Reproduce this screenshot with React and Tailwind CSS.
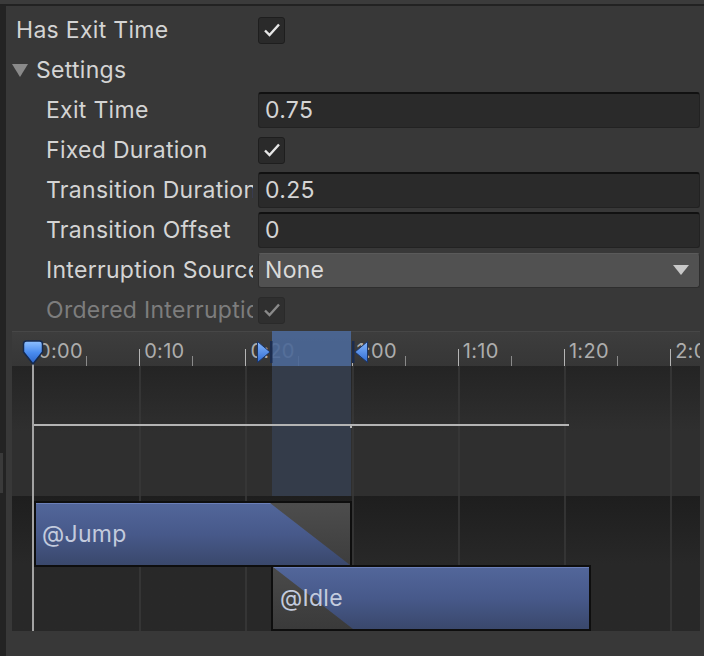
import React from "react";

const font = { fontFamily: "Inter, 'Noto Sans', sans-serif" };

function Check({ dim }) {
  return (
    <div
      className={`w-[27px] h-[27px] rounded-[3px] border flex items-center justify-center ${
        dim ? "bg-[#2f2f2f] border-[#2a2a2a]" : "bg-[#2a2a2a] border-[#1e1e1e]"
      }`}
    >
      <svg width="20" height="20" viewBox="0 0 20 20">
        <path
          d="M3 10.5 L7.5 15 L17 4.5"
          fill="none"
          stroke={dim ? "#8a8a8a" : "#e6e6e6"}
          strokeWidth="2.4"
        />
      </svg>
    </div>
  );
}

function Field({ value }) {
  return (
    <div className="h-[36px] flex-1 rounded-[3px] bg-[#2a2a2a] border border-[#222] border-t-[#111] border-t-2 flex items-center pl-[6px] text-[#d4d4d4]">
      {value}
    </div>
  );
}

function Row({ label, indent, dim, children }) {
  return (
    <div className="h-10 flex items-center">
      <div
        className={`w-[252px] shrink-0 pr-[5px] ${indent ? "pl-[40px]" : "pl-[10px]"} ${
          dim ? "text-[#7d7d7d]" : "text-[#d4d4d4]"
        }`}
      >
        <div className="overflow-hidden whitespace-nowrap">{label}</div>
      </div>
      <div className="flex-1 flex items-center pr-[4px]">{children}</div>
    </div>
  );
}

const majors = ["0:00", "0:10", "0:20", "1:00", "1:10", "1:20", "2:00"];

function Ruler() {
  return (
    <div className="h-[35px] bg-gradient-to-b from-[#3d3d3d] to-[#363636] border-t border-[#474747] flex pl-[21px] overflow-hidden">
      {majors.map((m) => (
        <div key={m} className="w-[106.2px] shrink-0 h-full flex items-end">
          <div className="w-px h-[17px] bg-[#b5b5b5]" />
          <div className="w-[52px] h-full pl-[4px] pt-[8px] text-[20px] leading-[22px] text-[#adadad] whitespace-nowrap">
            {m}
          </div>
          <div className="w-px h-[10px] bg-[#8a8a8a]" />
        </div>
      ))}
    </div>
  );
}

function Timeline() {
  return (
    <div className="relative ml-[6px] mt-[1px] w-[688px] h-[300px] overflow-hidden bg-[#282828]">
      <Ruler />
      {/* curve track */}
      <div className="h-[130px] bg-gradient-to-b from-[#242424] via-[#2f2f2f] to-[#2f2f2f]" />
      {/* clip track */}
      <div className="h-[135px] bg-gradient-to-b from-[#1e1e1e] via-[#282828] to-[#282828]" />

      {/* selection column */}
      <div className="absolute left-[260px] top-0 w-[79px] h-[165px] flex flex-col">
        <div className="h-[35px] bg-[#4b6898]/90" />
        <div className="flex-1 bg-[#343c4a]" />
      </div>

      {/* grid lines */}
      <div className="absolute inset-x-0 top-[35px] bottom-0 flex pl-[21px]">
        {majors.map((m, i) => (
          <div
            key={"g" + m}
            className={`w-[106.2px] shrink-0 h-full ${i === 0 ? "" : "border-l-2 border-[#383838]/80"}`}
          />
        ))}
      </div>

      {/* exit-time curve */}
      <div className="absolute left-[21px] top-[93px] w-[536px] h-[2px] bg-[#b4b4b4]" />
      <div className="absolute left-[338px] top-[94px] w-[2px] h-[3px] bg-[#b4b4b4]" />

      {/* playhead line */}
      <div className="absolute left-[20px] top-[28px] w-[2px] h-[272px] bg-[#a3a3a3]" />

      {/* @Jump clip */}
      <div className="absolute left-[22px] top-[170px] w-[318px] h-[66px] border-2 border-[#0e0e0e] overflow-hidden">
        <div className="absolute inset-0 bg-gradient-to-b from-[#52669a] via-[#47598a] to-[#3a486c] border-t border-[#6b7fb8]" />
        <svg className="absolute right-0 top-0" width="80" height="62" viewBox="0 0 80 62" preserveAspectRatio="none">
          <defs>
            <linearGradient id="gj" x1="0" y1="0" x2="0" y2="1">
              <stop offset="0" stopColor="#4d4d4d" />
              <stop offset="1" stopColor="#3d3d3d" />
            </linearGradient>
          </defs>
          <polygon points="0,0 80,0 80,62" fill="url(#gj)" />
        </svg>
        <div className="relative h-full flex items-center pl-[6px] text-[23px] text-[#c3cbdd]">
          @Jump
        </div>
      </div>

      {/* @Idle clip */}
      <div className="absolute left-[259px] top-[234px] w-[320px] h-[66px] border-2 border-[#0e0e0e] overflow-hidden">
        <div className="absolute inset-0 bg-gradient-to-b from-[#52669a] via-[#47598a] to-[#3a486c] border-t border-[#6b7fb8]" />
        <svg className="absolute left-0 top-0" width="80" height="62" viewBox="0 0 80 62" preserveAspectRatio="none">
          <defs>
            <linearGradient id="gi" x1="0" y1="0" x2="0" y2="1">
              <stop offset="0" stopColor="#4a4a4a" />
              <stop offset="1" stopColor="#3a3a3a" />
            </linearGradient>
          </defs>
          <polygon points="0,0 80,62 0,62" fill="url(#gi)" />
        </svg>
        <div className="relative h-full flex items-center pl-[7px] text-[23px] text-[#c3cbdd]">
          @Idle
        </div>
      </div>

      {/* transition start marker */}
      <svg className="absolute left-[245px] top-[10px]" width="16" height="22" viewBox="0 0 16 22">
        <defs>
          <linearGradient id="mk" x1="0" y1="0" x2="0" y2="1">
            <stop offset="0" stopColor="#86b8ff" />
            <stop offset="1" stopColor="#2f6ad0" />
          </linearGradient>
        </defs>
        <polygon points="0.5,0.5 13,11 0.5,21.5" fill="url(#mk)" stroke="#1c3566" strokeWidth="1" />
        <rect x="13" y="0" width="2.5" height="22" fill="#1c2c4e" />
      </svg>

      {/* transition end marker */}
      <svg className="absolute left-[340px] top-[10px]" width="16" height="22" viewBox="0 0 16 22">
        <rect x="0" y="0" width="2.5" height="22" fill="#1c2c4e" />
        <polygon points="15.5,0.5 3,11 15.5,21.5" fill="url(#mk)" stroke="#1c3566" strokeWidth="1" />
      </svg>

      {/* playhead marker */}
      <svg className="absolute left-[9px] top-[9px]" width="24" height="26" viewBox="0 0 24 26">
        <defs>
          <linearGradient id="ph" x1="0" y1="0" x2="0" y2="1">
            <stop offset="0" stopColor="#8fc0ff" />
            <stop offset="0.5" stopColor="#4a8cf0" />
            <stop offset="1" stopColor="#2a62c8" />
          </linearGradient>
        </defs>
        <path
          d="M2.5 4 Q2.5 1 5.5 1 H18.5 Q21.5 1 21.5 4 V12 L12 24 L2.5 12 Z"
          fill="url(#ph)"
          stroke="#15294d"
          strokeWidth="1.5"
        />
      </svg>
    </div>
  );
}

export default function App() {
  return (
    <div
      className="w-[704px] h-[656px] bg-[#383838] overflow-hidden text-[23px] tracking-[0.3px]"
      style={font}
    >
      <div className="h-[4px] bg-[#3b3b3b]" />
      <div className="h-[2px] bg-[#222]" />
      <div className="flex h-[650px]">
        <div className="w-[6px] shrink-0 bg-[#232323] flex flex-col">
          <div className="h-[447px]" />
          <div className="h-[40px] w-[3px] bg-[#3a3a3a]" />
        </div>
        <div className="flex-1 pt-[4px]">
          <Row label="Has Exit Time">
            <Check />
          </Row>
          <div className="h-10 flex items-center pl-[6px] text-[#d4d4d4]">
            <svg width="16" height="15" viewBox="0 0 16 15" className="mr-[8px]">
              <polygon points="0,1 16,1 8,14" fill="#8a8a8a" />
            </svg>
            Settings
          </div>
          <Row label="Exit Time" indent>
            <Field value="0.75" />
          </Row>
          <Row label="Fixed Duration" indent>
            <Check />
          </Row>
          <Row label="Transition Duration" indent>
            <Field value="0.25" />
          </Row>
          <Row label="Transition Offset" indent>
            <Field value="0" />
          </Row>
          <Row label="Interruption Source" indent>
            <div className="h-[35px] flex-1 rounded-[3px] bg-[#515151] border border-[#2e2e2e] border-t-[#5a5a5a] flex items-center justify-between pl-[6px] pr-[10px] text-[#dadada]">
              None
              <svg width="16" height="10" viewBox="0 0 16 10">
                <polygon points="0,0 16,0 8,10" fill="#c8c8c8" />
              </svg>
            </div>
          </Row>
          <Row label="Ordered Interruption" indent dim>
            <Check dim />
          </Row>
          <Timeline />
        </div>
      </div>
    </div>
  );
}
